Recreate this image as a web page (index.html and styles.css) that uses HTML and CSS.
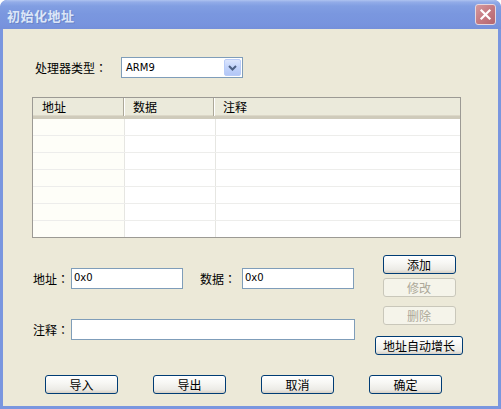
FILE: index.html
```html
<!DOCTYPE html>
<html>
<head>
<meta charset="utf-8">
<link rel="stylesheet" href="styles.css">
</head>
<body>
<div class="window">
  <div class="titlebar">
    <span class="title">初始化地址</span>
    <span class="close"><svg width="19" height="19" viewBox="0 0 19 19"><path d="M5.5 5.5 L13.5 13.5 M13.5 5.5 L5.5 13.5" stroke="#fff" stroke-width="2.2" stroke-linecap="square" fill="none"/></svg></span>
  </div>
  <div class="client">
    <div class="row-proc">
      <span class="label proc-label">处理器类型<span class="colon">：</span></span>
      <div class="combo">
        <span class="combo-text">ARM9</span>
        <span class="combo-btn"><svg width="15" height="17" viewBox="0 0 15 17"><path d="M4 7 L7.5 10.5 L11 7" stroke="#4D6185" stroke-width="2" fill="none"/></svg></span>
      </div>
    </div>
    <div class="list">
      <div class="lv-head">
        <div class="hcol c1">地址</div>
        <div class="hcol c2">数据</div>
        <div class="hcol c3">注释</div>
      </div>
      <div class="lv-rows">
        <div class="lv-row"><div class="c1"></div><div class="c2"></div><div class="c3"></div></div>
        <div class="lv-row"><div class="c1"></div><div class="c2"></div><div class="c3"></div></div>
        <div class="lv-row"><div class="c1"></div><div class="c2"></div><div class="c3"></div></div>
        <div class="lv-row"><div class="c1"></div><div class="c2"></div><div class="c3"></div></div>
        <div class="lv-row"><div class="c1"></div><div class="c2"></div><div class="c3"></div></div>
        <div class="lv-row"><div class="c1"></div><div class="c2"></div><div class="c3"></div></div>
        <div class="lv-row"><div class="c1"></div><div class="c2"></div><div class="c3"></div></div>
      </div>
    </div>
    <div class="lower">
      <div class="form">
        <div class="frow">
          <span class="label flabel">地址<span class="colon">：</span></span>
          <div class="edit w-short">0x0</div>
          <span class="label flabel lbl-data">数据<span class="colon">：</span></span>
          <div class="edit w-short">0x0</div>
        </div>
        <div class="frow frow2">
          <span class="label flabel">注释<span class="colon">：</span></span>
          <div class="edit w-long"></div>
        </div>
      </div>
      <div class="side">
        <button class="btn">添加</button>
        <button class="btn b-mod" disabled>修改</button>
        <button class="btn b-del" disabled>删除</button>
        <button class="btn b-wide">地址自动增长</button>
      </div>
    </div>
    <div class="bottom">
      <button class="btn">导入</button>
      <button class="btn">导出</button>
      <button class="btn">取消</button>
      <button class="btn">确定</button>
    </div>
  </div>
</div>
</body>
</html>
```

FILE: styles.css
```css
html, body {
  margin: 0;
  padding: 0;
  background: #ffffff;
}

body {
  font-family: "Noto Sans CJK SC", "DejaVu Sans", sans-serif;
  font-size: 12px;
  color: #000;
}

.window {
  width: 501px;
  height: 409px;
  display: flex;
  flex-direction: column;
  background: #7A96DF;
  border-radius: 7px 7px 0 0;
  box-sizing: border-box;
  overflow: hidden;
}

.titlebar {
  height: 29px;
  flex: none;
  display: flex;
  align-items: center;
  justify-content: space-between;
  padding: 0 5px 0 7px;
  background: linear-gradient(#AEC3F0 0px, #93ACE8 2px, #819EE2 6px, #7A97DF 14px, #7894DE 24px, #7590DA 29px);
  border-radius: 7px 7px 0 0;
}

.title {
  font-weight: bold;
  font-size: 13px;
  color: #DCE6F8;
  text-shadow: 1px 1px 0 #6A84C8;
  letter-spacing: 0.5px;
  padding-top: 1px;
}

.close {
  width: 21px;
  height: 21px;
  box-sizing: border-box;
  border: 1px solid #E6D7DE;
  border-radius: 3px;
  background: linear-gradient(135deg, #D59A9E 0%, #C57A82 50%, #B4666F 100%);
  display: flex;
  align-items: center;
  justify-content: center;
}

.client {
  flex: 1;
  margin: 0 3px 3px 3px;
  background: #ECE9D8;
  padding-top: 28px;
  display: flex;
  flex-direction: column;
}

.label {
  font-size: 12px;
  line-height: 14px;
  white-space: nowrap;
}

.colon {
  font-family: "Noto Sans CJK TC", "Noto Sans CJK SC", sans-serif;
}

.row-proc {
  display: flex;
  align-items: center;
  margin-left: 32px;
  height: 21px;
}

.proc-label {
  width: 86px;
}

.combo {
  width: 122px;
  height: 21px;
  box-sizing: border-box;
  border: 1px solid #7F9DB9;
  background: #fff;
  display: flex;
  align-items: center;
  justify-content: space-between;
}

.combo-text {
  font-family: "DejaVu Sans", sans-serif;
  font-size: 10px;
  padding-left: 4px;
}

.combo-btn {
  width: 17px;
  height: 17px;
  margin-right: 1px;
  box-sizing: border-box;
  border: 1px solid #B9CCF8;
  border-radius: 2px;
  background: linear-gradient(#DCE6FD, #C2D3FB 50%, #B3C7F6);
  display: flex;
  align-items: center;
  justify-content: center;
}

.list {
  margin: 19px 0 0 29px;
  width: 429px;
  height: 141px;
  box-sizing: border-box;
  border: 1px solid #9C9A94;
  background: #fff;
  overflow: hidden;
}

.lv-head {
  display: flex;
  height: 21px;
  box-sizing: border-box;
  background: #EBEADB;
  border-bottom: 3px solid #CFCBBB;
  box-shadow: inset 0 -1px 0 #DCD8C8;
}

.hcol {
  box-sizing: border-box;
  padding-left: 9px;
  line-height: 18px;
}

.hcol.c1,
.hcol.c2 {
  border-right: 1px solid #ACA899;
  box-shadow: 1px 0 0 #fff;
}

.c1 {
  width: 91px;
  flex: none;
}

.c2 {
  width: 90px;
  flex: none;
}

.c3 {
  flex: 1;
}

.lv-row {
  display: flex;
  height: 17px;
  box-sizing: border-box;
  border-bottom: 1px solid #EDEDEB;
}

.lv-row .c1 {
  border-right: 1px solid #E6E6E2;
  background: #FEFEF8;
}

.lv-row .c2 {
  border-right: 1px solid #E6E6E2;
}

.lower {
  display: flex;
  margin-top: 17px;
  height: 100px;
}

.form {
  margin-left: 30px;
  padding-top: 13px;
  width: 342px;
}

.frow {
  display: flex;
  align-items: center;
  height: 21px;
}

.frow2 {
  margin-top: 30px;
}

.flabel {
  width: 38px;
}

.lbl-data {
  margin-left: 17px;
  width: 42px;
}

.edit {
  height: 21px;
  box-sizing: border-box;
  border: 1px solid #7F9DB9;
  background: #fff;
  font-family: "DejaVu Sans", sans-serif;
  font-size: 10px;
  line-height: 14px;
  padding: 2px 2px;
}

.w-short {
  width: 112px;
}

.w-long {
  width: 284px;
}

.side {
  width: 88px;
  display: flex;
  flex-direction: column;
  align-items: center;
}

.btn {
  width: 73px;
  height: 19px;
  box-sizing: border-box;
  border: 1px solid #003C74;
  border-radius: 3px;
  background: linear-gradient(#FFFFFF 0%, #F7F7F4 40%, #ECEBE6 80%, #D6D0C5 100%);
  font-family: "Noto Sans CJK SC", sans-serif;
  font-size: 12px;
  line-height: 15px;
  color: #000;
  padding: 0;
  margin: 0;
}

.btn:disabled {
  border-color: #C9C7BA;
  background: #F5F4EA;
  color: #ACA899;
}

.b-mod {
  margin-top: 4px;
}

.b-del {
  margin-top: 9px;
}

.b-wide {
  margin-top: 11px;
  width: 88px;
}

.bottom {
  display: flex;
  gap: 35px;
  margin-top: 20px;
  padding-left: 42px;
}
```
